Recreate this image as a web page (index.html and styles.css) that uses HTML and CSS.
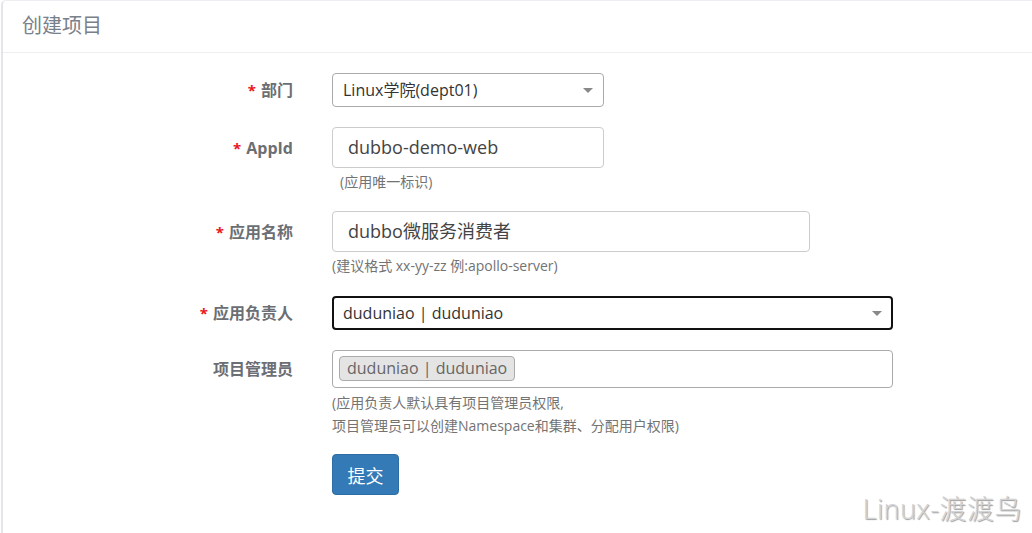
FILE: index.html
```html
<!DOCTYPE html>
<html lang="zh-CN">
<head>
<meta charset="utf-8">
<title>创建项目</title>
<link rel="stylesheet" href="styles.css">
</head>
<body>
<div class="panel">
  <div class="panel-heading">创建项目</div>
  <form class="panel-body">
    <div class="form-row">
      <label class="form-label"><span class="req">*</span>部门</label>
      <div class="select w-272">
        <span>Linux学院(dept01)</span>
        <i class="caret"></i>
      </div>
    </div>

    <div class="form-row">
      <label class="form-label"><span class="req">*</span>AppId</label>
      <div class="input w-272">dubbo-demo-web</div>
      <p class="help help-indent">(应用唯一标识)</p>
    </div>

    <div class="form-row">
      <label class="form-label"><span class="req">*</span>应用名称</label>
      <div class="input w-478">dubbo微服务消费者</div>
      <p class="help help-tall">(建议格式 xx-yy-zz 例:apollo-server)</p>
    </div>

    <div class="form-row">
      <label class="form-label"><span class="req">*</span>应用负责人</label>
      <div class="select select-focus w-561">
        <span>duduniao | duduniao</span>
        <i class="caret"></i>
      </div>
    </div>

    <div class="form-row">
      <label class="form-label">项目管理员</label>
      <div class="multi w-561">
        <span class="tag">duduniao | duduniao</span>
      </div>
      <p class="help help-multi">(应用负责人默认具有项目管理员权限,<br>项目管理员可以创建Namespace和集群、分配用户权限)</p>
    </div>

    <div class="form-row form-actions">
      <button type="button" class="btn-primary">提交</button>
    </div>
  </form>
</div>
<div class="watermark">Linux-渡渡鸟</div>
</body>
</html>
```

FILE: styles.css
```css
html, body {
  margin: 0;
  padding: 0;
  background: #fff;
  font-family: "Open Sans", "Noto Sans CJK SC", sans-serif;
  color: #333;
  height: 100%;
  overflow: hidden;
}

.panel {
  margin-left: 1px;
  height: 100%;
  border-left: 2px solid #e4e5eb;
  border-top: 1px solid #eceef2;
  border-top-left-radius: 5px;
  box-sizing: border-box;
}

.panel-heading {
  height: 51px;
  line-height: 50px;
  padding-left: 19px;
  font-size: 20px;
  color: #78808a;
  border-bottom: 1px solid #eeeeee;
}

.panel-body {
  margin: 0;
  padding-top: 20px;
}

.form-row {
  display: grid;
  grid-template-columns: 290px auto;
  column-gap: 39px;
  justify-content: start;
  margin-bottom: 20px;
}

.form-label {
  grid-column: 1;
  align-self: center;
  text-align: right;
  font-size: 16px;
  font-weight: bold;
  color: #6b6e73;
  line-height: 20px;
}

.req {
  color: #e8161b;
  font-size: 15px;
  margin-right: 5px;
}

.w-272 { width: 272px; }
.w-478 { width: 478px; }
.w-561 { width: 561px; }

.select,
.input,
.multi {
  grid-column: 2;
  box-sizing: border-box;
  background: #fff;
  border: 1px solid #aaa;
  border-radius: 4px;
}

.select {
  position: relative;
  height: 34px;
  line-height: 32px;
  padding-left: 10px;
  font-size: 16px;
  color: #333;
}

.select-focus {
  border: 2px solid #111;
  line-height: 30px;
  padding-left: 9px;
}

.caret {
  position: absolute;
  right: 10px;
  top: 50%;
  margin-top: -2px;
  width: 0;
  height: 0;
  border-left: 5px solid transparent;
  border-right: 5px solid transparent;
  border-top: 5px solid #888;
}

.select-focus .caret {
  right: 9px;
}

.input {
  height: 41px;
  line-height: 39px;
  padding-left: 15px;
  font-size: 18px;
  color: #444;
  border-color: #ccc;
}

.multi {
  height: 38px;
  padding: 5px 6px;
}

.tag {
  display: inline-block;
  box-sizing: border-box;
  height: 25px;
  line-height: 23px;
  padding: 0 7px;
  font-size: 16px;
  color: #666;
  background: #e4e4e4;
  border: 1px solid #aaa;
  border-radius: 4px;
}

.help {
  grid-column: 2;
  margin: 4px 0 -1px;
  font-size: 14px;
  line-height: 20px;
  color: #737373;
}

.help-tall {
  margin-bottom: 0;
}

.help-indent {
  padding-left: 8px;
}

.help-multi {
  margin-top: 3px;
  line-height: 23px;
  margin-bottom: -3px;
}

.form-actions .btn-primary {
  grid-column: 2;
}

.btn-primary {
  width: 67px;
  height: 41px;
  padding: 0;
  font-family: inherit;
  font-size: 18px;
  color: #fff;
  background: #337ab7;
  border: 1px solid #2e6da4;
  border-radius: 4px;
}

.watermark {
  position: absolute;
  right: 10px;
  bottom: 6px;
  font-size: 27px;
  font-weight: 300;
  letter-spacing: 0.5px;
  color: #d4d4d4;
  text-shadow: 1px 1px 1px rgba(0, 0, 0, 0.4);
}
```
